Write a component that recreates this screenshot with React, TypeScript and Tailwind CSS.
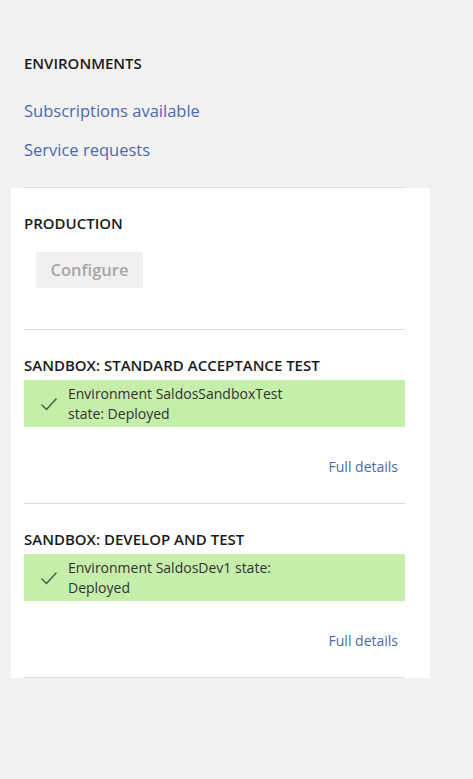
function Check() {
  return (
    <svg width="18" height="14" viewBox="0 0 18 14" fill="none" className="shrink-0">
      <path d="M1.5 7.5 6.5 12.5 16.5 1.5" stroke="#3d5a3d" strokeWidth="1.3" />
    </svg>
  );
}

function Env({ title, lines }: { title: string; lines: string[] }) {
  return (
    <div className="border-t border-[#dcdcdc] pt-[25px]">
      <h3 className="text-[15px] font-semibold uppercase leading-[20px] text-[#1b1b1b]">{title}</h3>
      <div className="mt-[5px] flex h-[47px] items-center gap-[10px] bg-[#c6eeab] pl-[16px]">
        <Check />
        <div className="text-[14px] leading-[20px] text-[#323130]">
          {lines.map((l) => (
            <div key={l}>{l}</div>
          ))}
        </div>
      </div>
      <div className="flex justify-end pr-[7px] pt-[30px] pb-[26px]">
        <a href="#" className="text-[14px] leading-[20px] text-[#4a6aaf]">
          Full details
        </a>
      </div>
    </div>
  );
}

export default function App() {
  return (
    <div className="h-[779px] w-[473px] bg-[#f3f2f1] pt-[53px] font-['Open_Sans',sans-serif]">
      <div className="px-6">
        <h2 className="text-[15px] font-semibold uppercase leading-[20px] text-[#1b1b1b]">Environments</h2>
        <nav className="mt-[27px] flex flex-col gap-[17px] text-[16.5px] leading-[22px] text-[#4a6aaf]">
          <a href="#">Subscriptions available</a>
          <a href="#">Service requests</a>
        </nav>
        <div className="mt-[26px] w-[381px] border-t border-[#dcdcdc]" />
      </div>
      <div className="ml-[11px] w-[419px] bg-white pl-[13px] pr-[25px] pt-[25px]">
        <h3 className="text-[15px] font-semibold uppercase leading-[20px] text-[#1b1b1b]">Production</h3>
        <button className="ml-[12px] mt-[19px] h-[36px] w-[107px] bg-[#f1f0ef] text-[16.5px] font-semibold text-[#a6a6a6]">
          Configure
        </button>
        <div className="mt-[41px]">
          <Env title="Sandbox: Standard acceptance test" lines={["Environment SaldosSandboxTest", "state: Deployed"]} />
          <Env title="Sandbox: Develop and test" lines={["Environment SaldosDev1 state:", "Deployed"]} />
          <div className="border-t border-[#dcdcdc]" />
        </div>
      </div>
    </div>
  );
}
